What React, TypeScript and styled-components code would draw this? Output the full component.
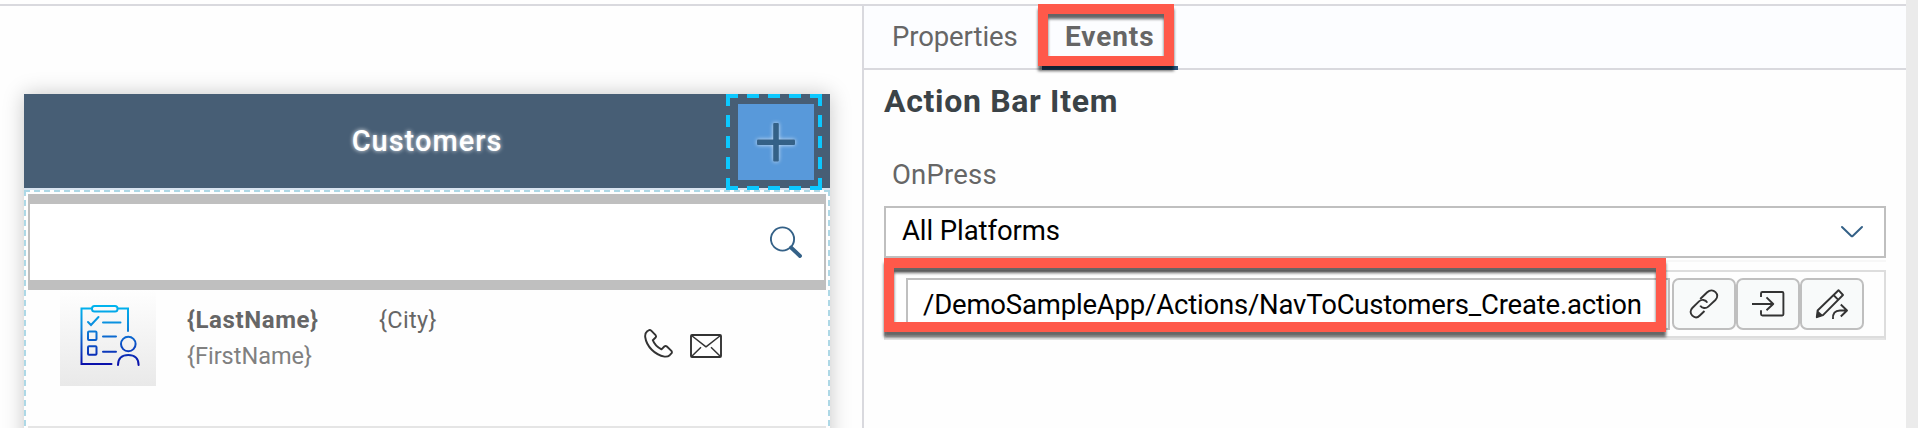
import React from "react";
import styled, { createGlobalStyle, css } from "styled-components";

const GlobalStyle = createGlobalStyle`
  *, *::before, *::after { box-sizing: border-box; }
  body { margin: 0; background: #fefefe; font-family: Roboto, "Liberation Sans", sans-serif; overflow: hidden; }
`;

const Page = styled.div`
  display: flex;
  height: 428px;
  overflow: hidden;
`;

const Workspace = styled.main`
  width: 1906px;
  height: 428px;
  padding-top: 4px;
`;

const Split = styled.div`
  display: flex;
  height: 424px;
  border-top: 2px solid #d9d9de;
`;

const Gutter = styled.div`
  width: 12px;
  background: #ebebeb;
`;

const Canvas = styled.section`
  width: 862px;
  padding: 88px 0 0 24px;
  overflow: hidden;
`;

const Device = styled.div`
  width: 806px;
  height: 420px;
  background: #fefefe;
  box-shadow: 0 0 20px rgba(0, 0, 0, 0.22);
`;

const ActionBar = styled.header`
  display: flex;
  align-items: flex-start;
  height: 96px;
  padding-right: 8px;
  background: linear-gradient(#475e75 94px, #d9e4f0 94px);
`;

const BarTitle = styled.h1`
  flex: 1;
  margin: 0;
  padding-left: 104px;
  color: #fff;
  font-size: 29px;
  font-weight: 500;
  line-height: 95px;
  letter-spacing: 1px;
  text-align: center;
  text-shadow: 0 0 4px rgba(255, 255, 255, 0.9);
`;

const SelectedItem = styled.div`
  position: relative;
  display: flex;
  width: 96px;
  height: 96px;
  padding: 10px 8px 10px 12px;
`;

const SelectionOutline = styled.svg`
  position: absolute;
  inset: 0;
`;

const ItemFace = styled.div`
  display: flex;
  align-items: center;
  justify-content: center;
  width: 76px;
  height: 76px;
  background: #5899da;
  svg { filter: drop-shadow(0 0 2px rgba(255, 255, 255, 0.75)); }
`;

const dashH = "repeating-linear-gradient(90deg, #add8e6 0 6px, transparent 6px 10px)";
const dashV = "repeating-linear-gradient(180deg, #add8e6 0 6px, transparent 6px 10px)";

const ListFrame = styled.div`
  height: 320px;
  padding: 4px;
  background-image: ${dashH}, ${dashV}, ${dashV};
  background-size: 100% 2px, 2px 100%, 2px 100%;
  background-position: 0 0, 0 0, 100% 0;
  background-repeat: no-repeat;
`;

const SearchBox = styled.div`
  display: flex;
  align-items: flex-start;
  justify-content: flex-end;
  height: 96px;
  padding: 22px 22px 0 0;
  border: solid #bfbfbf;
  border-width: 10px 2px;
  background: #fff;
`;

const ContactRow = styled.article`
  display: flex;
  align-items: flex-start;
  height: 138px;
  padding-left: 32px;
  border-bottom: 2px solid #e5e5e5;
`;

const Thumb = styled.div`
  width: 96px;
  height: 96px;
  background: linear-gradient(#fefefe, #e9e9e9);
`;

const NameColumn = styled.div`
  width: 192px;
  padding-top: 12px;
  margin-left: 31px;
`;

const Field = styled.div<{ $tone?: "strong" | "muted"; $spacing?: number }>`
  color: #666;
  font-size: 23.5px;
  line-height: 36px;
  letter-spacing: ${(p) => p.$spacing ?? 0}px;
  white-space: nowrap;
  ${(p) => p.$tone === "strong" && css`font-size: 24px; font-weight: 700;`}
  ${(p) => p.$tone === "muted" && css`color: #808080;`}
`;

const CityColumn = styled.div`
  width: 265px;
  padding-top: 12px;
`;

const RowActions = styled.div`
  display: flex;
  gap: 16px;
  padding-top: 39px;
`;

const Inspector = styled.aside`
  width: 1044px;
  border-left: 2px solid #d9d9de;
`;

const Tabs = styled.nav`
  display: flex;
  height: 64px;
  padding-left: 5px;
  background: #fcfdff;
  border-bottom: 2px solid #d9d9de;
`;

const Tab = styled.div<{ $active?: boolean; $spacing: number; $width: number }>`
  position: relative;
  width: ${(p) => p.$width}px;
  padding-left: 23px;
  color: #666;
  font-size: 27.5px;
  line-height: 61px;
  letter-spacing: ${(p) => p.$spacing}px;
  font-weight: ${(p) => (p.$active ? 700 : 400)};
  ${(p) => p.$active && css`
    font-size: 28px;
    &::after {
      content: "";
      position: absolute;
      left: 0;
      right: 0;
      bottom: -2px;
      height: 4px;
      background: #285680;
    }
  `}
`;

const Callout = styled.span<{ $top: number; $left: number; $w: number; $h: number }>`
  position: absolute;
  z-index: 1;
  top: ${(p) => p.$top}px;
  left: ${(p) => p.$left}px;
  width: ${(p) => p.$w}px;
  height: ${(p) => p.$h}px;
  border: 10px solid #ff594a;
  filter: drop-shadow(0 5px 1.5px rgba(0, 0, 0, 0.6));
  pointer-events: none;
`;

const Body = styled.div`
  padding: 0 20px;
`;

const Heading = styled.h2`
  margin: 0;
  padding-top: 10px;
  color: #3b4347;
  font-size: 32px;
  font-weight: 700;
  line-height: 42px;
  letter-spacing: 0.68px;
`;

const Label = styled.div`
  padding: 36px 0 0 8px;
  height: 84px;
  color: #666;
  font-size: 27.5px;
  line-height: 34px;
  letter-spacing: 0.2px;
`;

const Select = styled.div`
  display: flex;
  align-items: center;
  justify-content: space-between;
  height: 52px;
  padding: 0 20px 0 16px;
  border: 2px solid #bfbfbf;
  background: #fff;
  color: #000;
  font-size: 27.5px;
  line-height: 46px;
  letter-spacing: -0.08px;
  span { padding-bottom: 2px; }
`;

const Hairline = styled.div`
  height: 12px;
  padding-top: 2px;
  &::before { content: ""; display: block; height: 2px; background: #f7f7f7; }
`;

const EventRow = styled.div`
  position: relative;
  display: flex;
  height: 70px;
  padding: 6px 0 0 20px;
  border: 2px solid #ddd;
  box-shadow: inset 0 -2px 0 #ddd;
  border-bottom-color: #e5e5e5;
`;

const PathInput = styled.div`
  width: 764px;
  height: 52px;
  margin-right: 2px;
  padding-left: 15px;
  border: 2px solid #bfbfbf;
  background: #fff;
  color: #000;
  font-size: 27.5px;
  line-height: 50px;
  letter-spacing: -0.19px;
  white-space: nowrap;
`;

const IconButton = styled.button`
  display: flex;
  align-items: center;
  justify-content: center;
  width: 64px;
  height: 52px;
  padding: 0;
  border: 2px solid #bfbfbf;
  border-radius: 7px;
  background: #f8fafa;
`;

const ClipboardIcon = () => (
  <svg width="96" height="96" viewBox="0 0 96 96" fill="none" stroke="url(#blues)" strokeWidth="2" strokeLinecap="round">
    <defs>
      <linearGradient id="blues" gradientUnits="userSpaceOnUse" x1="0" y1="16" x2="0" y2="76">
        <stop offset="0" stopColor="#00b4ee" />
        <stop offset="0.35" stopColor="#0c88dc" />
        <stop offset="1" stopColor="#0a0aa8" />
      </linearGradient>
    </defs>
    <path d="M32 18.5H21.5V74H51.500M58 18.500H68V41" />
    <rect x="32" y="16" width="25.500" height="5.500" rx="2.500" />
    <path d="M28 32l3 3 7.500-8M43 32.500H60.500M43 46.600H56M43 61.700H56" />
    <rect x="28" y="41.500" width="8.500" height="8.500" rx="1" />
    <rect x="28" y="56.300" width="8.500" height="8.500" rx="1" />
    <circle cx="68.300" cy="54" r="7.300" />
    <path d="M58 75c0-6.500 4-10 10.300-10s10.300 3.500 10.300 10" />
  </svg>
);

const SearchIcon = () => (
  <svg width="32" height="32" viewBox="0 0 32 32" fill="none" stroke="#346187">
    <circle cx="12.500" cy="13" r="11.600" strokeWidth="1.900" />
    <path d="M21 21.500L30 30" strokeWidth="3.800" strokeLinecap="round" />
  </svg>
);

const PhoneIcon = () => (
  <svg width="30" height="30" viewBox="0 0 30 30" fill="none" stroke="#333" strokeWidth="1.900" strokeLinejoin="round">
    <path d="M3.200 2.300L5 1.200Q6.200.7 7.200 1.600L11.600 6.200Q12.500 7.400 11.600 8.500L8.800 11.200C10.200 15 13.200 18.200 17.500 20.400L20.300 17.500Q21.600 16.400 22.900 17.500L27.400 21.900Q28.400 23.200 27.400 24.400L25.700 26.200Q23.800 28 20.500 27.600C11 26 2.500 17.500 1.200 8Q.8 4.300 3.200 2.300Z" />
  </svg>
);

const MailIcon = () => (
  <svg width="32" height="30" viewBox="0 0 32 30" fill="none" stroke="#333" strokeWidth="1.900" strokeLinejoin="round">
    <rect x="1" y="6" width="30" height="22" rx="1" />
    <path d="M1.500 6.500L16 17.800 30.500 6.500M1.500 27.500L11 18.300M30.500 27.500L21 18.300" strokeWidth="1.500" />
  </svg>
);

const LinkIcon = () => (
  <svg width="32" height="32" viewBox="0 0 32 32" fill="none" stroke="#333" strokeWidth="1.900">
    <path d="M12.200 11L19.200 4.300C22 1.600 25.300 2 27.500 4.100S30 9.400 27.400 12L20.300 18.600C17.800 20.900 13.800 20.400 12.200 17.600" />
    <path d="M19.300 14.600C17.700 11.500 13.500 11 11 13.400L4.300 20C1.900 22.500 2.200 25.600 4.300 27.600S9.300 30 11.800 27.500L16.500 23" />
  </svg>
);

const EnterIcon = () => (
  <svg width="34" height="32" viewBox="0 0 34 32" fill="none" stroke="#333" strokeWidth="1.900" strokeLinejoin="round">
    <path d="M10 9V5.500Q10 4 11.500 4H31.200Q32.400 4 32.400 5.200V26.300Q32.400 27.500 31.200 27.500H11.500Q10 27.500 10 26V22.300M1 16H22M15.500 9.300L22.200 16 15.500 22.300" />
  </svg>
);

const EditIcon = () => (
  <svg width="34" height="32" viewBox="0 0 34 32" fill="none" stroke="#333" strokeWidth="1.900" strokeLinejoin="round">
    <path d="M2.600 22.500L23.500 2.200 28 7 8 27.200 1.800 29.200ZM18.500 7L23.300 11.800" />
    <path d="M2.600 22.500L8 27.200 1.200 29.700Z" fill="#333" stroke="none" />
    <path d="M18 31C17.500 25.500 20 22.500 25 22.500H32M25.800 16.500L32 22.500 25.800 28.500" />
  </svg>
);

const Chevron = () => (
  <svg width="24" height="16" viewBox="0 0 24 16" fill="none" stroke="#346187" strokeWidth="2" strokeLinecap="round" strokeLinejoin="round">
    <path d="M2 3L11.300 12Q12 12.600 12.700 12L22 3" />
  </svg>
);

const dashOffsets = [0, 21, 42, 63, 84];

export default function App() {
  return (
    <Page>
      <GlobalStyle />
      <Workspace>
        <Split>
          <Canvas>
            <Device>
              <ActionBar>
                <BarTitle>Customers</BarTitle>
                <SelectedItem>
                  <SelectionOutline width="96" height="96" viewBox="0 0 96 96" fill="#0cc8ff">
                    {dashOffsets.map((o) => (
                      <g key={o}>
                        <rect x={o} y="0" width="12" height="4" />
                        <rect x={o} y="92" width="12" height="4" />
                        <rect x="0" y={o} width="4" height="12" />
                        <rect x="92" y={o} width="4" height="12" />
                      </g>
                    ))}
                  </SelectionOutline>
                  <ItemFace>
                    <svg width="40" height="40" viewBox="0 0 40 40" fill="#346187">
                      <rect x="1" y="17.500" width="38" height="5.500" rx="1" />
                      <rect x="17.200" y="1" width="5.600" height="38.500" rx="1" />
                    </svg>
                  </ItemFace>
                </SelectedItem>
              </ActionBar>
              <ListFrame>
                <SearchBox><SearchIcon /></SearchBox>
                <ContactRow>
                  <Thumb><ClipboardIcon /></Thumb>
                  <NameColumn>
                    <Field $tone="strong" $spacing={0.6}>{"{LastName}"}</Field>
                    <Field $tone="muted">{"{FirstName}"}</Field>
                  </NameColumn>
                  <CityColumn><Field $spacing={0.35}>{"{City}"}</Field></CityColumn>
                  <RowActions><PhoneIcon /><MailIcon /></RowActions>
                </ContactRow>
              </ListFrame>
            </Device>
          </Canvas>
          <Inspector>
            <Tabs>
              <Tab $width={173} $spacing={-0.1}>Properties</Tab>
              <Tab $width={136} $spacing={0.9} $active>
                Events
                <Callout $top={-2} $left={-4} $w={136} $h={62} />
              </Tab>
            </Tabs>
            <Body>
              <Heading>Action Bar Item</Heading>
              <Label>OnPress</Label>
              <Select><span>All Platforms</span><Chevron /></Select>
              <Hairline />
              <EventRow>
                <PathInput>/DemoSampleApp/Actions/NavToCustomers_Create.action</PathInput>
                <IconButton aria-label="Bind"><LinkIcon /></IconButton>
                <IconButton aria-label="Open"><EnterIcon /></IconButton>
                <IconButton aria-label="Edit"><EditIcon /></IconButton>
                <Callout $top={-14} $left={-2} $w={782} $h={74} />
              </EventRow>
            </Body>
          </Inspector>
        </Split>
      </Workspace>
      <Gutter />
    </Page>
  );
}
